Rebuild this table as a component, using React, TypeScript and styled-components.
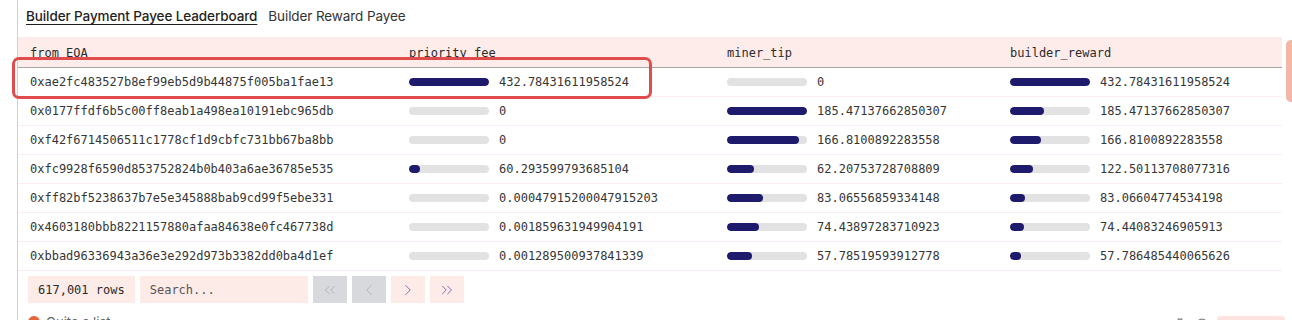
import styled, { createGlobalStyle } from "styled-components";
import {
  ChevronsLeft,
  ChevronLeft,
  ChevronRight,
  ChevronsRight,
  FlaskConical,
  Circle,
} from "lucide-react";

const GlobalStyle = createGlobalStyle`
  body {
    margin: 0;
    background: #fff;
    overflow: hidden;
    font-family: "Inter", "Liberation Sans", sans-serif;
  }
`;

type Row = {
  eoa: string;
  fee: string;
  tip: string;
  reward: string;
};

const rows: Row[] = [
  { eoa: "0xae2fc483527b8ef99eb5d9b44875f005ba1fae13", fee: "432.78431611958524", tip: "0", reward: "432.78431611958524" },
  { eoa: "0x0177ffdf6b5c00ff8eab1a498ea10191ebc965db", fee: "0", tip: "185.47137662850307", reward: "185.47137662850307" },
  { eoa: "0xf42f6714506511c1778cf1d9cbfc731bb67ba8bb", fee: "0", tip: "166.8100892283558", reward: "166.8100892283558" },
  { eoa: "0xfc9928f6590d853752824b0b403a6ae36785e535", fee: "60.293599793685104", tip: "62.20753728708809", reward: "122.50113708077316" },
  { eoa: "0xff82bf5238637b7e5e345888bab9cd99f5ebe331", fee: "0.00047915200047915203", tip: "83.06556859334148", reward: "83.06604774534198" },
  { eoa: "0x4603180bbb8221157880afaa84638e0fc467738d", fee: "0.001859631949904191", tip: "74.43897283710923", reward: "74.44083246905913" },
  { eoa: "0xbbad96336943a36e3e292d973b3382dd0ba4d1ef", fee: "0.001289500937841339", tip: "57.78519593912778", reward: "57.786485440065626" },
];

const maxFee = 432.78431611958524;
const maxTip = 185.47137662850307;
const maxReward = 432.78431611958524;

function App() {
  return (
    <>
      <GlobalStyle />
      <Card>
        <Tabs>
          <Tab active>Builder Payment Payee Leaderboard</Tab>
          <Tab>Builder Reward Payee</Tab>
        </Tabs>
        <TableWrap>
          <Table>
            <HeaderRow>
              <HeadCell>from_EOA</HeadCell>
              <HeadCell>priority_fee</HeadCell>
              <HeadCell>miner_tip</HeadCell>
              <HeadCell>builder_reward</HeadCell>
            </HeaderRow>
            {rows.map((r, idx) => (
              <DataRow key={idx}>
                <Cell>{r.eoa}</Cell>
                <BarCell value={r.fee} ratio={parseFloat(r.fee) / maxFee} />
                <BarCell value={r.tip} ratio={parseFloat(r.tip) / maxTip} />
                <BarCell
                  value={r.reward}
                  ratio={parseFloat(r.reward) / maxReward}
                />
              </DataRow>
            ))}
            <Highlight />
          </Table>
          <ScrollTrack>
            <ScrollThumb />
          </ScrollTrack>
        </TableWrap>
        <Footer>
          <RowCount>617,001 rows</RowCount>
          <Search placeholder="Search..." />
          <PageBtn disabled>
            <ChevronsLeft size={18} strokeWidth={1.2} />
          </PageBtn>
          <PageBtn disabled>
            <ChevronLeft size={18} strokeWidth={1.2} />
          </PageBtn>
          <PageBtn>
            <ChevronRight size={18} strokeWidth={1.2} />
          </PageBtn>
          <PageBtn>
            <ChevronsRight size={18} strokeWidth={1.2} />
          </PageBtn>
        </Footer>
        <BottomBar>
          <Note>
            <Dot />
            Quite a list
          </Note>
          <Actions>
            <FlaskConical size={14} color="#888" />
            <Circle size={14} color="#888" />
            <Download>Download</Download>
          </Actions>
        </BottomBar>
      </Card>
    </>
  );
}

function BarCell({ value, ratio }: { value: string; ratio: number }) {
  const pct = Math.max(0, Math.min(1, ratio)) * 100;
  return (
    <Cell>
      <BarBox>
        <Track>
          <Fill style={{ width: `${pct}%` }} />
        </Track>
        <span>{value}</span>
      </BarBox>
    </Cell>
  );
}

const Card = styled.div`
  margin-left: 17px;
  border-left: 1px solid #f2c3ba;
  min-height: 330px;
  padding-top: 7px;
`;

const Tabs = styled.div`
  display: flex;
  gap: 11px;
  padding-left: 8px;
  height: 18px;
`;

const Tab = styled.div<{ active?: boolean }>`
  font-size: 13.5px;
  line-height: 18px;
  color: ${(p) => (p.active ? "#1f1f1f" : "#333")};
  font-weight: ${(p) => (p.active ? 500 : 400)};
  text-decoration: ${(p) => (p.active ? "underline" : "none")};
  text-underline-offset: 3px;
  letter-spacing: -0.1px;
`;

const TableWrap = styled.div`
  display: flex;
  gap: 4px;
  margin-top: 12px;
`;

const Table = styled.div`
  position: relative;
  width: 1264px;
  flex-shrink: 0;
  font-family: "DejaVu Sans Mono", "Liberation Mono", monospace;
  font-size: 12px;
  color: #363636;
`;

const HeaderRow = styled.div`
  display: grid;
  grid-template-columns: 379px 318px 283px 1fr;
  height: 30px;
  align-items: center;
  background: #fdecea;
  border-bottom: 1px solid #a8a8a8;
`;

const HeadCell = styled.div`
  padding: 1px 12px 0;
  color: #2b2b2b;
`;

const DataRow = styled.div`
  display: grid;
  grid-template-columns: 379px 318px 283px 1fr;
  height: 28px;
  align-items: center;
  border-bottom: 1px solid #fbeeec;
`;

const Cell = styled.div`
  padding: 0 12px;
  white-space: nowrap;
`;

const BarBox = styled.div`
  display: flex;
  align-items: center;
  gap: 10px;
`;

const Track = styled.div`
  width: 80px;
  height: 8px;
  border-radius: 4px;
  background: #e2e2e2;
  overflow: hidden;
  flex-shrink: 0;
`;

const Fill = styled.div`
  height: 100%;
  border-radius: 4px;
  background: #1e1b6d;
`;

const Highlight = styled.div`
  position: absolute;
  left: -6px;
  top: 20px;
  width: 634px;
  height: 36px;
  border: 3px solid #e04c4c;
  border-radius: 7px;
  pointer-events: none;
`;

const ScrollTrack = styled.div`
  width: 10px;
  flex-shrink: 0;
`;

const ScrollThumb = styled.div`
  margin-top: 3px;
  height: 62px;
  border-radius: 5px;
  background: #f4b6a6;
`;

const Footer = styled.div`
  display: flex;
  gap: 5px;
  padding-left: 10px;
  margin-top: 5px;
  height: 27px;
  font-family: "DejaVu Sans Mono", "Liberation Mono", monospace;
  font-size: 12px;
`;

const RowCount = styled.div`
  display: flex;
  align-items: center;
  padding: 0 10px;
  background: #fdebe8;
  color: #2b2b2b;
`;

const Search = styled.input`
  width: 168px;
  box-sizing: border-box;
  border: none;
  outline: none;
  background: #fdebe8;
  padding: 0 10px;
  font-family: inherit;
  font-size: 12px;
  color: #333;
  &::placeholder {
    color: #555;
  }
`;

const PageBtn = styled.div<{ disabled?: boolean }>`
  width: 34px;
  display: flex;
  align-items: center;
  justify-content: center;
  background: ${(p) => (p.disabled ? "#d7d9dc" : "#fdebe8")};
  color: ${(p) => (p.disabled ? "#aeb0b8" : "#7a5aa6")};
`;

const BottomBar = styled.div`
  display: flex;
  justify-content: space-between;
  align-items: flex-start;
  margin-top: 11px;
  padding: 0 7px 0 10px;
`;

const Note = styled.div`
  display: flex;
  align-items: center;
  gap: 6px;
  font-size: 13px;
  color: #666;
`;

const Dot = styled.span`
  width: 12px;
  height: 12px;
  border-radius: 50%;
  background: #e8663d;
`;

const Actions = styled.div`
  display: flex;
  align-items: center;
  gap: 8px;
  margin-top: 2px;
`;

const Download = styled.div`
  background: #fde3e0;
  color: #d04a4a;
  font-size: 11px;
  padding: 2px 8px;
  border-radius: 4px;
`;

export default App;
